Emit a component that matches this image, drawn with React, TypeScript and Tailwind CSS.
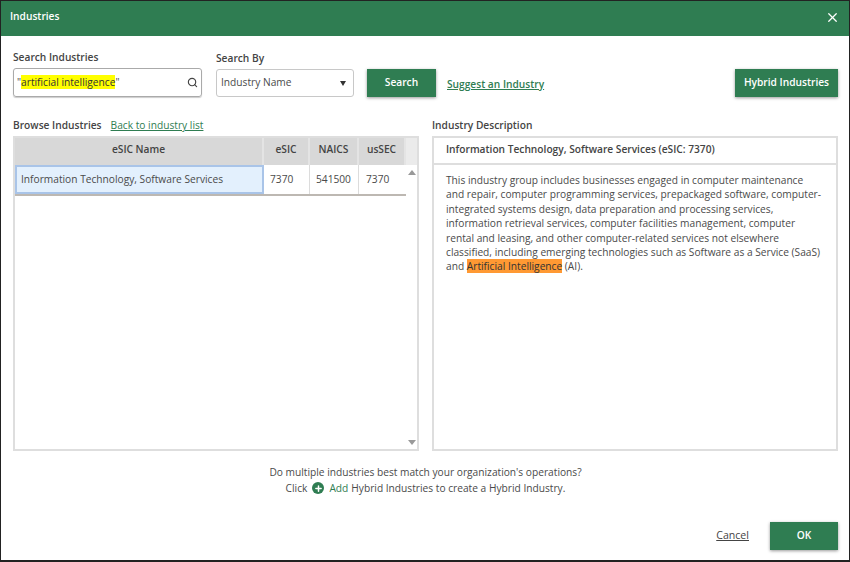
import { Search, X, Plus } from "lucide-react";

const font = { fontFamily: '"Open Sans", sans-serif' };

function HeadCell({ className, children }: { className: string; children: string }) {
  return (
    <div className={`flex items-center justify-center border-r-2 border-[#e4e4e4] pb-[3px] font-semibold text-[#444] ${className}`}>
      {children}
    </div>
  );
}

function BodyCell({ className, children }: { className: string; children: string }) {
  return <div className={`flex items-center border-r border-[#dcdcdc] pl-[6px] ${className}`}>{children}</div>;
}

export default function App() {
  return (
    <div
      className="flex h-[562px] w-[850px] flex-col overflow-hidden border border-[#222] border-b-2 bg-white text-[10.2px] text-[#4a4a4a]"
      style={font}
    >
      <header className="flex h-[35px] shrink-0 items-center justify-between bg-[#2f7d52] pb-[3px] pl-[9px] pr-[9px] text-white">
        <span className="font-semibold">Industries</span>
        <X size={15} strokeWidth={2} />
      </header>

      <div className="flex flex-1 flex-col pl-[12px] pr-[11px]">
        <div className="mt-[13px] flex items-end">
          <div className="w-[189px]">
            <div className="mb-[3px] h-[16px] leading-[16px] font-semibold text-[#444]">Search Industries</div>
            <div className="flex h-[29px] items-center justify-between rounded-[3px] border border-[#aaa] pl-[3px] pr-[3px] shadow-[0_1px_1px_#ccc]">
              <span>
                "<span className="bg-[#ffff00] text-[#333]">artificial intelligence</span>"
              </span>
              <Search size={11} strokeWidth={2.5} className="text-[#444]" />
            </div>
          </div>

          <div className="ml-[14px] w-[138px]">
            <div className="mb-[3px] h-[16px] leading-[16px] font-semibold text-[#444]">Search By</div>
            <div className="flex h-[28px] items-center justify-between rounded-[3px] border border-[#c8c8c8] pl-[4px] pr-[7px]">
              <span>Industry Name</span>
              <span className="h-0 w-0 border-x-[3.5px] border-t-[5px] border-x-transparent border-t-[#333]" />
            </div>
          </div>

          <button className="ml-[13px] h-[28px] w-[69px] bg-[#2f7d52] font-semibold text-white shadow-[0_1px_3px_#999]">
            Search
          </button>
          <a className="ml-[11px] self-end pb-[5px] font-semibold text-[#2f7d52] underline">Suggest an Industry</a>
          <button className="ml-auto h-[28px] w-[103px] bg-[#2f7d52] font-semibold text-white shadow-[0_1px_3px_#999]">
            Hybrid Industries
          </button>
        </div>

        <div className="mt-[20px] flex gap-[13px]">
          <div className="w-[406px]">
            <div className="mb-[3px] flex h-[16px] items-center leading-[16px]">
              <span className="font-semibold text-[#444]">Browse Industries</span>
              <a className="ml-[9px] text-[#2f7d52] underline">Back to industry list</a>
            </div>
            <div className="flex h-[315px] border-2 border-[#dedede]">
              <div className="w-[391px]">
                <div className="flex h-[27px] bg-[#d8d8d8]">
                  <HeadCell className="w-[249px]">eSIC Name</HeadCell>
                  <HeadCell className="w-[46px]">eSIC</HeadCell>
                  <HeadCell className="w-[49px]">NAICS</HeadCell>
                  <HeadCell className="w-[47px]">usSEC</HeadCell>
                </div>
                <div className="flex h-[31px] border-b-2 border-[#bdb8b2]">
                  <div className="flex w-[249px] items-center border-2 border-[#a9c4e8] bg-[#e3f0fd] pl-[4px]">
                    Information Technology, Software Services
                  </div>
                  <BodyCell className="w-[46px]">7370</BodyCell>
                  <BodyCell className="w-[49px]">541500</BodyCell>
                  <div className="flex w-[47px] items-center pl-[7px]">7370</div>
                </div>
              </div>
              <div className="flex w-[13px] flex-col items-center">
                <div className="h-[27px] w-full bg-[#ebebeb]" />
                <span className="mt-[5px] h-0 w-0 border-x-[4px] border-b-[5px] border-x-transparent border-b-[#999]" />
                <span className="mt-auto mb-[4px] h-0 w-0 border-x-[4px] border-t-[5px] border-x-transparent border-t-[#999]" />
              </div>
            </div>
          </div>

          <div className="w-[406px]">
            <div className="mb-[3px] h-[16px] leading-[16px] font-semibold text-[#444]">Industry Description</div>
            <div className="h-[315px] border-2 border-[#dedede]">
              <div className="flex h-[27px] items-center border-b-2 border-[#dedede] pb-[2px] pl-[12px] font-semibold text-[#444]">
                Information Technology, Software Services (eSIC: 7370)
              </div>
              <p className="pl-[12px] pr-[8px] pt-[8px] leading-[14.4px]">
                This industry group includes businesses engaged in computer maintenance
                <br />
                and repair, computer programming services, prepackaged software, computer-
                <br />
                integrated systems design, data preparation and processing services,
                <br />
                information retrieval services, computer facilities management, computer
                <br />
                rental and leasing, and other computer-related services not elsewhere
                <br />
                classified, including emerging technologies such as Software as a Service (SaaS)
                <br />
                and <span className="bg-[#ff9933] text-[#333]">Artificial Intelligence</span> (AI).
              </p>
            </div>
          </div>
        </div>

        <div className="mt-[13px] text-center leading-[16px]">
          <div>Do multiple industries best match your organization's operations?</div>
          <div className="flex items-center justify-center">
            Click
            <span className="mx-[5px] flex h-[12px] w-[12px] items-center justify-center rounded-full bg-[#2f7d52]">
              <Plus size={9} strokeWidth={4} className="text-white" />
            </span>
            <span className="text-[#2f7d52]">Add</span>
            <span className="ml-[3px]">Hybrid Industries to create a Hybrid Industry.</span>
          </div>
        </div>

        <div className="mt-auto mb-[10px] flex items-center justify-end">
          <a className="mr-[21px] text-[10.6px] font-medium text-[#444] underline">Cancel</a>
          <button className="h-[28px] w-[68px] bg-[#2f7d52] font-semibold text-white shadow-[0_1px_3px_#999]">OK</button>
        </div>
      </div>
    </div>
  );
}
